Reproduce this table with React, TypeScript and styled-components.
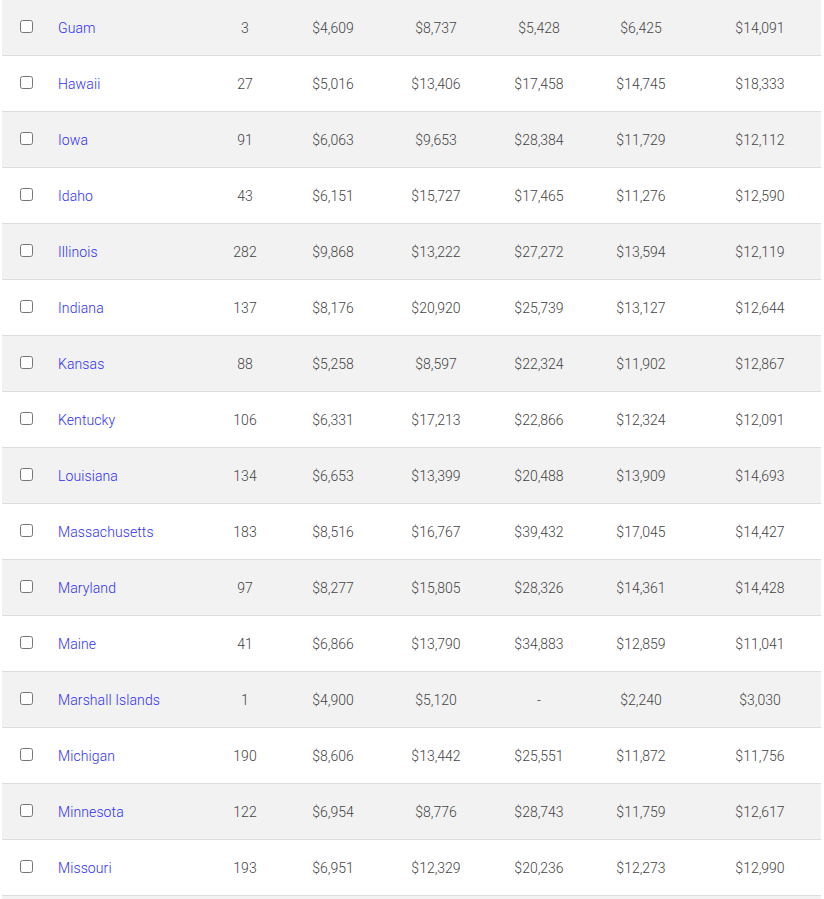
import React from "react";
import styled, { createGlobalStyle } from "styled-components";

const Global = createGlobalStyle`
  html, body { margin: 0; padding: 0; background: #fff; }
  body { font-family: Roboto, "Noto Sans", Arial, sans-serif; overflow: hidden; }
  *, *::before, *::after { box-sizing: border-box; }
`;

const Page = styled.div`
  padding: 0 3px 0 2px;
  height: 899px;
  overflow: hidden;
`;

const Table = styled.div`
  display: grid;
  grid-template-columns: 42px 157px 88px 88px 118px 88px 116px 122px;
  width: 819px;
`;

const Row = styled.div<{ $shade: boolean }>`
  display: contents;
  & > div {
    background: ${(p) => (p.$shade ? "#f2f2f2" : "#ffffff")};
    border-bottom: 1px solid #dddddd;
    height: 56px;
  }
`;

const Cell = styled.div<{ $align?: "left" | "center" }>`
  display: flex;
  align-items: center;
  justify-content: ${(p) => (p.$align === "left" ? "flex-start" : "center")};
  font-size: 14px;
  font-weight: 300;
  color: #444;
  padding-bottom: 0;
`;

const CheckCell = styled.div`
  display: flex;
  align-items: center;
  padding-left: 15px;
  padding-bottom: 2px;
`;

const Check = styled.input`
  width: 13px;
  height: 13px;
  margin: 0 0 0 3px;
`;

const NameLink = styled.a`
  color: #2f2fff;
  text-decoration: none;
  font-size: 14px;
  font-weight: 300;
  letter-spacing: 0.1px;
  padding-left: 14px;
`;

type R = [string, string, string, string, string, string, string];

const rows: R[] = [
  ["Guam", "3", "$4,609", "$8,737", "$5,428", "$6,425", "$14,091"],
  ["Hawaii", "27", "$5,016", "$13,406", "$17,458", "$14,745", "$18,333"],
  ["Iowa", "91", "$6,063", "$9,653", "$28,384", "$11,729", "$12,112"],
  ["Idaho", "43", "$6,151", "$15,727", "$17,465", "$11,276", "$12,590"],
  ["Illinois", "282", "$9,868", "$13,222", "$27,272", "$13,594", "$12,119"],
  ["Indiana", "137", "$8,176", "$20,920", "$25,739", "$13,127", "$12,644"],
  ["Kansas", "88", "$5,258", "$8,597", "$22,324", "$11,902", "$12,867"],
  ["Kentucky", "106", "$6,331", "$17,213", "$22,866", "$12,324", "$12,091"],
  ["Louisiana", "134", "$6,653", "$13,399", "$20,488", "$13,909", "$14,693"],
  ["Massachusetts", "183", "$8,516", "$16,767", "$39,432", "$17,045", "$14,427"],
  ["Maryland", "97", "$8,277", "$15,805", "$28,326", "$14,361", "$14,428"],
  ["Maine", "41", "$6,866", "$13,790", "$34,883", "$12,859", "$11,041"],
  ["Marshall Islands", "1", "$4,900", "$5,120", "-", "$2,240", "$3,030"],
  ["Michigan", "190", "$8,606", "$13,442", "$25,551", "$11,872", "$11,756"],
  ["Minnesota", "122", "$6,954", "$8,776", "$28,743", "$11,759", "$12,617"],
  ["Missouri", "193", "$6,951", "$12,329", "$20,236", "$12,273", "$12,990"],
];

export default function App() {
  return (
    <Page>
      <Global />
      <Table>
        {rows.map((r, i) => (
          <Row key={r[0]} $shade={i % 2 === 0}>
            <CheckCell>
              <Check type="checkbox" />
            </CheckCell>
            <Cell $align="left">
              <NameLink href="#">{r[0]}</NameLink>
            </Cell>
            {r.slice(1).map((v, j) => (
              <Cell key={j}>{v}</Cell>
            ))}
          </Row>
        ))}
        <Row $shade={true}>
          {Array.from({ length: 8 }).map((_, j) => (
            <Cell key={j} />
          ))}
        </Row>
      </Table>
    </Page>
  );
}
